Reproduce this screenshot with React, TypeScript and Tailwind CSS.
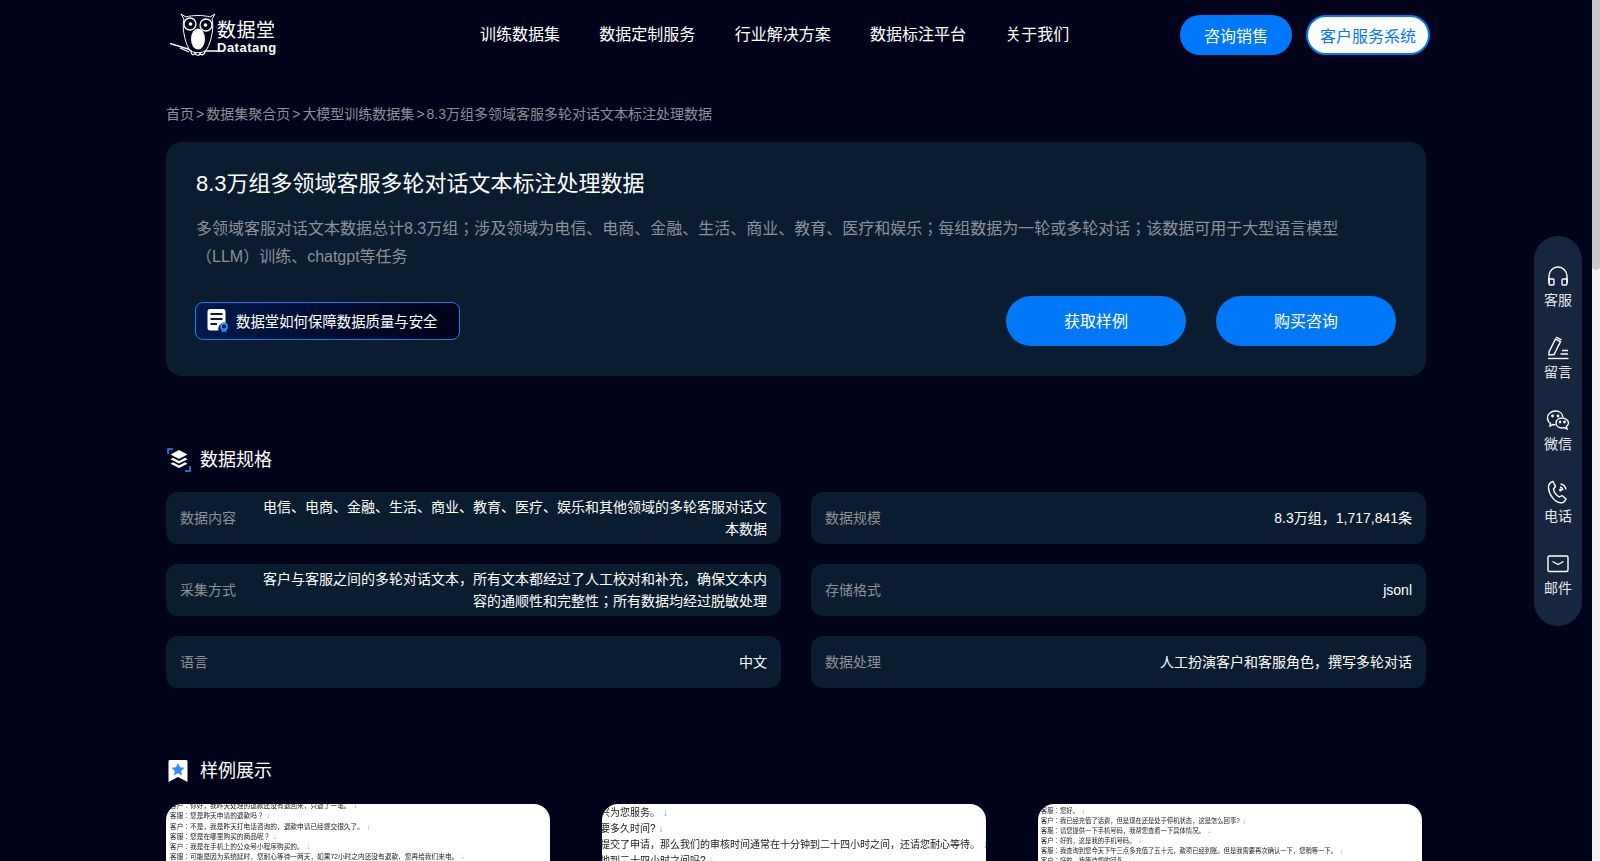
const navItems = ["训练数据集", "数据定制服务", "行业解决方案", "数据标注平台", "关于我们"];

const specs = [
  ["数据内容", "电信、电商、金融、生活、商业、教育、医疗、娱乐和其他领域的多轮客服对话文本数据"],
  ["数据规模", "8.3万组，1,717,841条"],
  ["采集方式", "客户与客服之间的多轮对话文本，所有文本都经过了人工校对和补充，确保文本内容的通顺性和完整性；所有数据均经过脱敏处理"],
  ["存储格式", "jsonl"],
  ["语言", "中文"],
  ["数据处理", "人工扮演客户和客服角色，撰写多轮对话"],
];

const sampleOne = [
  "客户：你好，我昨天处理的退款还没有退回来，只退了一笔。",
  "客服：您是昨天申请的退款吗？",
  "客户：不是，我是昨天打电话咨询的，退款申请已经提交很久了。",
  "客服：您是在哪里购买的商品呢？",
  "客户：我是在手机上的公众号小程序购买的。",
  "客服：可能是因为系统延时，您耐心等待一两天，如果72小时之内还没有退款，您再给我们来电。",
];

const sampleTwo = [
  "兴为您服务。",
  "要多久时间?",
  "提交了申请，那么我们的审核时间通常在十分钟到二十四小时之间，还请您耐心等待。",
  "地到二十四小时之间吗?",
];

const sampleThree = [
  "客服：您好。",
  "客户：我已经充值了话费，但是现在还是处于停机状态，这是怎么回事?",
  "客服：请您提供一下手机号码，我帮您查看一下具体情况。",
  "客户：好的，这是我的手机号码。",
  "客服：我查询到您今天下午三点多充值了五十元，款项已经到账。但是我需要再次确认一下，您稍等一下。",
  "客户：好的，我等待您的回复。",
];

function Owl() {
  return (
    <svg width="50" height="46" viewBox="0 0 50 46" fill="none" className="shrink-0">
      <path d="M11 2 L16 5 C22 3 34 3 40 5 L45 2 L42 7 C44 14 42 28 37 37 C34 42 22 42 19 37 C14 28 12 14 14 7 Z" stroke="white" strokeWidth="1" />
      <circle cx="20" cy="12" r="6" stroke="white" strokeWidth="1.300" />
      <circle cx="36" cy="13" r="6" stroke="white" strokeWidth="1.300" />
      <circle cx="20.500" cy="12" r="1.800" fill="white" />
      <circle cx="35.500" cy="13" r="1.800" fill="white" />
      <path d="M26.500 17 L28 20 L29.500 17 Z" fill="white" />
      <ellipse cx="28" cy="27" rx="7" ry="10.500" fill="white" />
      <path d="M0 31.500 L18 37 L22 39.500 M35 39 L48 39" stroke="white" strokeWidth="1.400" />
      <path d="M10 36 L19 40" stroke="white" strokeWidth="1.200" />
      <path d="M21 39 C21 43 24 44 25 41 C26 44 30 44 30 41 C31 44 35 43 35 39" stroke="white" strokeWidth="1.200" />
    </svg>
  );
}

function DocIcon() {
  return (
    <svg width="22" height="24" viewBox="0 0 22 24" fill="none" className="shrink-0">
      <path d="M3 0 H16 C17.500 0 18.500 1 18.500 2.500 V14 A6 6 0 0 0 11.500 21.500 H3 C1.500 21.500 0.500 20.500 0.500 19 V2.500 C0.500 1 1.500 0 3 0 Z" fill="white" />
      <path d="M3.500 5 H15.500 M3.500 10 H15.500 M3.500 15 H10" stroke="#0a1c30" strokeWidth="2" />
      <circle cx="17" cy="17.500" r="3" stroke="#2f8dff" strokeWidth="1.800" />
      <path d="M15 20 L14.500 23.500 L17 22.200 L19.500 23.500 L19 20" fill="#2f8dff" />
    </svg>
  );
}

function LayersIcon() {
  return (
    <svg width="24" height="24" viewBox="0 0 24 24" fill="none" className="shrink-0">
      <path d="M1 6 V1 H6 M23 18 V23 H18" stroke="#2f8dff" strokeWidth="1.500" />
      <path d="M12 2 L20.500 6.500 L12 11 L3.500 6.500 Z" fill="white" />
      <path d="M6 9.800 L12 13 L18 9.800 L20.500 11.300 L12 15.500 L3.500 11.300 Z" fill="white" />
      <path d="M6 14.300 L12 17.500 L18 14.300 L20.500 15.800 L12 20 L3.500 15.800 Z" fill="white" />
    </svg>
  );
}

function BookmarkIcon() {
  return (
    <svg width="20" height="24" viewBox="0 0 20 24" fill="none" className="shrink-0">
      <path d="M2 1 C1 1 0.500 1.500 0.500 2.500 V23 L10 18 L19.500 23 V2.500 C19.500 1.500 19 1 18 1 Z" fill="white" />
      <path d="M10 4 L12 8.300 L16.500 8.800 L13.200 12 L14 16.500 L10 14.300 L6 16.500 L6.800 12 L3.500 8.800 L8 8.300 Z" fill="#2f8dff" />
    </svg>
  );
}

function Headset() {
  return (
    <svg width="24" height="24" viewBox="0 0 24 24" fill="none" stroke="white" strokeWidth="1.400">
      <path d="M3 19 V12 A9 9 0 0 1 21 12 V19" />
      <path d="M3 15 H7 C7.600 15 8 15.400 8 16 V20 C8 20.600 7.600 21 7 21 H4.500 C3.600 21 3 20.400 3 19.500 Z" />
      <path d="M21 15 H17 C16.400 15 16 15.400 16 16 V20 C16 20.600 16.400 21 17 21 H19.500 C20.400 21 21 20.400 21 19.500 Z" />
    </svg>
  );
}

function Pen() {
  return (
    <svg width="24" height="24" viewBox="0 0 24 24" fill="none" stroke="white" strokeWidth="1.400">
      <path d="M2 22.500 H22.500" />
      <path d="M9.500 3 L14.500 5.500 L8 18.500 L3 19 L3 16 Z" />
      <path d="M10 1 L15.500 3.800" />
      <path d="M16 14.500 H22 M14.500 18 H22" />
    </svg>
  );
}

function Wechat() {
  return (
    <svg width="24" height="24" viewBox="0 0 24 24" fill="none" stroke="white" strokeWidth="1.400">
      <path d="M17 9 C16.500 5.500 13.500 3 9.500 3 C5 3 1.500 6 1.500 10 C1.500 12.300 2.700 14.200 4.500 15.500 L4 18 L7 16.500 C7.800 16.700 8.500 16.800 9.500 16.800" />
      <circle cx="6.500" cy="8" r="0.700" fill="white" />
      <circle cx="12" cy="8" r="0.700" fill="white" />
      <path d="M16 10 C12.500 10 10 12.200 10 15 C10 17.800 12.500 20 16 20 C16.800 20 17.500 19.900 18.200 19.700 L21 21 L20.400 18.500 C21.700 17.500 22.500 16.300 22.500 15 C22.500 12.200 19.500 10 16 10 Z" />
      <circle cx="14" cy="14" r="0.700" fill="white" />
      <circle cx="18.500" cy="14" r="0.700" fill="white" />
    </svg>
  );
}

function PhoneWave() {
  return (
    <svg width="24" height="24" viewBox="0 0 24 24" fill="none" stroke="white" strokeWidth="1.400">
      <path d="M7 1.500 L9.500 6.500 L7.500 9 C8 12.500 10.500 15.500 13.500 17 L16 15.500 L20 19 C19 21.500 17 23 14.500 22.800 C9 22.300 3 15 2.500 8 C2.300 5 4.300 2.300 7 1.500 Z" />
      <path d="M14.500 4 C17.500 4.500 19.500 6.500 20 9.500 M14 7 C15.500 7.300 16.700 8.500 17 10" />
      <circle cx="14.500" cy="10" r="0.800" fill="white" />
    </svg>
  );
}

function Mail() {
  return (
    <svg width="24" height="24" viewBox="0 0 24 24" fill="none" stroke="white" strokeWidth="1.400">
      <rect x="2" y="4" width="20" height="15.500" rx="1.500" />
      <path d="M6.500 9.500 L12 12.500 L17.500 9.500" />
    </svg>
  );
}

function SampleCard({ lines, innerClass }: { lines: string[]; innerClass: string }) {
  return (
    <div className="h-[57px] w-[384px] shrink-0 overflow-hidden rounded-t-2xl bg-white">
      <div className={"whitespace-nowrap text-[#222] " + innerClass}>
        {lines.map((line) => (
          <div key={line}>
            {line}
            <span className="ml-[3px] text-[#4a9cf5]">↓</span>
          </div>
        ))}
      </div>
    </div>
  );
}

export default function App() {
  return (
    <div className="flex h-[861px] overflow-hidden bg-[#000319] text-white [text-spacing-trim:space-all]">
      <div className="relative w-[1592px] shrink-0 font-['Liberation_Sans','Noto_Sans_CJK_JP',sans-serif]">
        {/* HEADER */}
        <header className="flex h-[70px] items-center pl-[170px] pr-[162px]">
          <div className="flex w-[310px] items-start">
            <Owl />
            <div className="-ml-[3px] mt-[9px] flex flex-col">
              <span className="text-[19px] leading-[20px] tracking-[0.5px]">数据堂</span>
              <span className="text-[13px] font-bold leading-[14px] tracking-[0.5px]">Datatang</span>
            </div>
          </div>
          <nav className="flex gap-[39.300px] text-base">
            {navItems.map((item) => (
              <a key={item}>{item}</a>
            ))}
          </nav>
          <div className="ml-auto flex items-center gap-[14px]">
            <button className="h-10 w-[112px] rounded-full bg-[#0078fa] pt-[3px] text-base">咨询销售</button>
            <button className="h-10 w-[124px] rounded-full border-2 border-[#0078fa] bg-white pt-[3px] text-base text-[#0078fa]">
              客户服务系统
            </button>
          </div>
        </header>

        <main className="mx-auto w-[1260px]">
          {/* BREADCRUMB */}
          <div className="mt-[34px] flex h-5 items-center gap-[2px] text-sm text-[#8c8f98]">
            <span>首页</span>
            <span>&gt;</span>
            <span>数据集聚合页</span>
            <span>&gt;</span>
            <span>大模型训练数据集</span>
            <span>&gt;</span>
            <span>8.3万组多领域客服多轮对话文本标注处理数据</span>
          </div>

          {/* INTRO CARD */}
          <section className="mt-[18px] h-[234px] rounded-2xl bg-[#0a1c30] px-[30px] pt-[27px]">
            <h1 className="text-[22px] font-normal leading-[30px]">8.3万组多领域客服多轮对话文本标注处理数据</h1>
            <p className="mt-[16px] text-base leading-[28px] text-[#8c9097]">
              多领域客服对话文本数据总计8.3万组；涉及领域为电信、电商、金融、生活、商业、教育、医疗和娱乐；每组数据为一轮或多轮对话；该数据可用于大型语言模型（LLM）训练、chatgpt等任务
            </p>
            <div className="mt-[25px] flex items-center justify-between">
              <a className="-ml-[1px] flex h-[38px] w-[265px] items-center gap-[7px] rounded-lg border border-[#1a7df0] bg-gradient-to-r from-[#001a4a] to-[#000319] pl-[11px] text-[14.400px]">
                <DocIcon />
                <span className="pt-[3px]">数据堂如何保障数据质量与安全</span>
              </a>
              <div className="flex gap-[30px]">
                <button className="h-[50px] w-[180px] rounded-full bg-[#0078fa] pt-[2px] text-base">获取样例</button>
                <button className="h-[50px] w-[180px] rounded-full bg-[#0078fa] pt-[2px] text-base">购买咨询</button>
              </div>
            </div>
          </section>

          {/* SPECS */}
          <h2 className="mt-[70px] flex h-7 items-center gap-[9px] pl-[1px] text-lg font-normal">
            <LayersIcon />
            数据规格
          </h2>
          <div className="mt-[18px] grid grid-cols-2 gap-x-[30px] gap-y-5">
            {specs.map(([label, value]) => (
              <div key={label} className="flex h-[52px] items-center justify-between rounded-xl bg-[#0a1c30] px-[14px] text-sm leading-[22px]">
                <span className="shrink-0 text-[#8c9097]">{label}</span>
                <span className="max-w-[510px] text-right">{value}</span>
              </div>
            ))}
          </div>

          {/* SAMPLES */}
          <h2 className="mt-[69px] flex h-7 items-center gap-[12px] pl-[2px] text-lg font-normal">
            <BookmarkIcon />
            样例展示
          </h2>
          <div className="mt-[19px] flex gap-[52px]">
            <SampleCard lines={sampleOne} innerClass="-mt-[3px] pl-[4px] text-[6.700px] leading-[10.300px] blur-[0.3px]" />
            <SampleCard lines={sampleTwo} innerClass="-ml-[2px] mt-[1px] text-[10px] leading-[16px] blur-[0.2px]" />
            <SampleCard lines={sampleThree} innerClass="mt-[2px] pl-[3px] text-[6.300px] leading-[10px] blur-[0.3px]" />
          </div>
        </main>

        {/* FLOATING TOOLBAR */}
        <aside className="absolute left-[1534px] top-[236px] flex h-[390px] w-12 flex-col items-center gap-[9px] rounded-3xl bg-[#16263f] pt-[28px] text-sm">
          {[
            [<Headset key="a" />, "客服"],
            [<Pen key="b" />, "留言"],
            [<Wechat key="c" />, "微信"],
            [<PhoneWave key="d" />, "电话"],
            [<Mail key="e" />, "邮件"],
          ].map(([icon, label], i) => (
            <div key={i} className="flex h-[63px] flex-col items-center">
              {icon}
              <span className="mt-[2px] leading-[20px] text-[#e6e8ec]">{label}</span>
            </div>
          ))}
        </aside>
      </div>

      {/* SCROLLBAR */}
      <div className="h-full w-2 bg-[#f1f1f1]">
        <div className="h-[270px] rounded-b-sm bg-[#c8c8c8]" />
      </div>
    </div>
  );
}
